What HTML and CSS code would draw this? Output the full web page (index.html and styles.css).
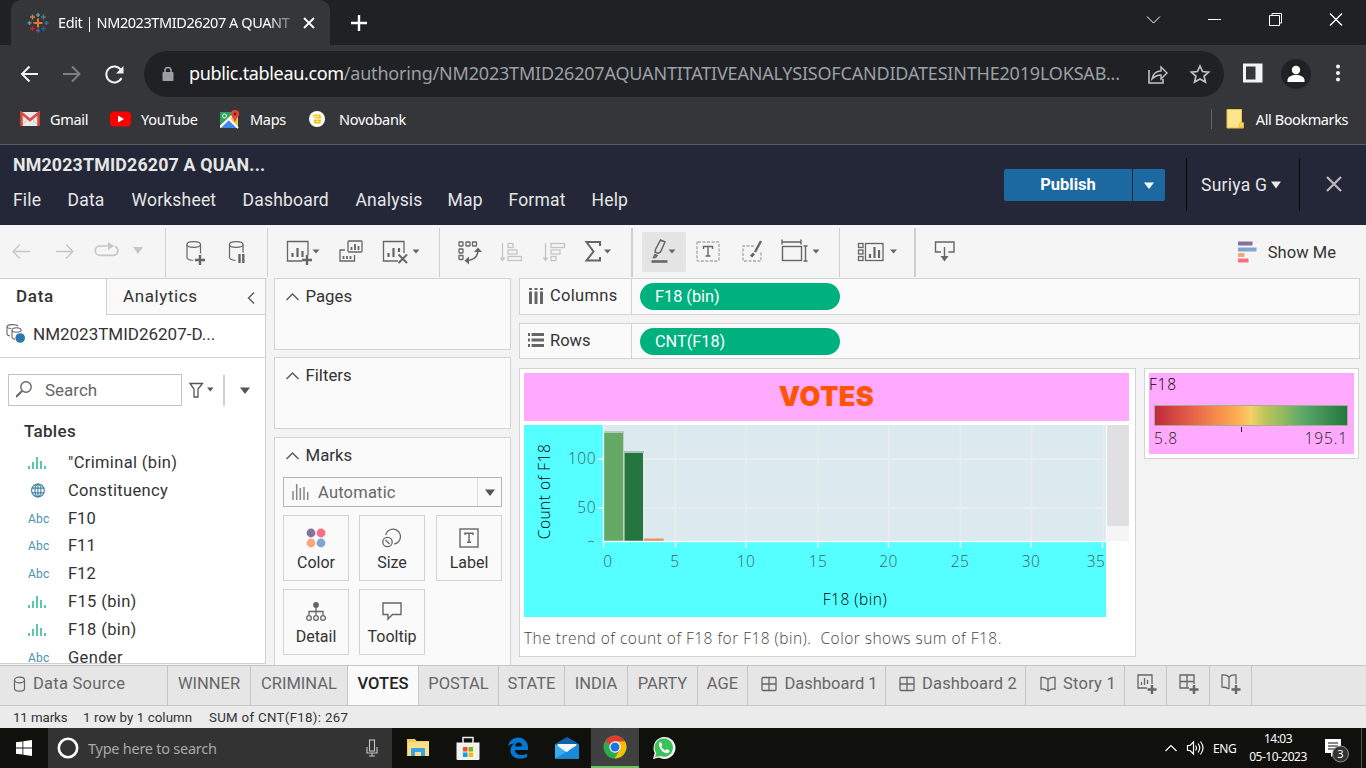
FILE: index.html
```html
<!DOCTYPE html>
<html lang="en">
<head>
<meta charset="utf-8">
<title>Edit | NM2023TMID26207 A QUANTITATIVE ANALYSIS</title>
<link rel="stylesheet" href="styles.css">
</head>
<body>
<div class="screen">

<header class="browser">
  <div class="tabstrip">
    <div class="browser-tab">
      <svg class="favicon" width="22" height="22" viewBox="27 12 22 22" fill="none" stroke-width="2">
        <path d="M38 18.500v9M33.500 23h9" stroke="#e8762d"/>
        <path d="M32.500 14.500v5M30 17h5" stroke="#c8893c" stroke-width="1.500"/>
        <path d="M43.500 14.500v5M41 17h5" stroke="#4e7a90" stroke-width="1.500"/>
        <path d="M32.500 26v5M30 28.500h5" stroke="#c72037" stroke-width="1.500"/>
        <path d="M43.500 26v5M41 28.500h5" stroke="#2c568f" stroke-width="1.500"/>
        <path d="M38 13v4M36 15h4M29.500 21v4M27.500 23h4" stroke="#6790a5" stroke-width="1.600"/>
        <path d="M38 28.500v4M36 30.500h4M46.500 21v4M44.500 23h4" stroke="#59619a" stroke-width="1.600"/>
      </svg>
      <span class="tab-title">Edit | NM2023TMID26207 A QUANT</span>
      <svg width="12" height="12" viewBox="0 0 12 12" stroke="#fff" stroke-width="1.800"><path d="M1 1l10 10M11 1L1 11"/></svg>
    </div>
    <svg class="new-tab" width="18" height="18" viewBox="0 0 18 18" stroke="#fff" stroke-width="2.400"><path d="M9 1v16M1 9h16"/></svg>
    <svg class="window-controls" width="200" height="20" viewBox="1145 10 200 20" fill="none" stroke="#fff" stroke-width="1">
      <path d="M1147 16.500l6.500 6.500 6.500-6.500M1208 19.500h13"/><path d="M1330 13.500l12 12M1342 13.500l-12 12" stroke-width="1.300"/>
      <path d="M1269.500 15.500h10v10h-10zM1272 15v-1.500h9.500v9.500h-1.500"/>
    </svg>
  </div>
  <div class="navbar">
    <svg width="110" height="24" viewBox="18 61 110 24" fill="none" stroke="#f1f3f4" stroke-width="2">
      <path d="M38 73H22M29.500 65.500L22 73l7.500 7.500"/>
      <path d="M63 73h16M72 65.500l7.500 7.500-7.500 7.500" stroke="#7d7f83"/>
      <path d="M121.500 77a8 8 0 1 1-.500-8"/>
      <path d="M123.500 65v7.500H116z" fill="#f1f3f4" stroke="none"/>
    </svg>
    <div class="omnibox">
      <svg width="12" height="16" viewBox="0 0 12 16"><path d="M3 6V4.500a3 3 0 0 1 6 0V6" fill="none" stroke="#9aa0a6" stroke-width="1.600"/><rect x=".5" y="6" width="11" height="9" rx="1" fill="#9aa0a6"/></svg>
      <span class="url"><b>public.tableau.com</b>/authoring/NM2023TMID26207AQUANTITATIVEANALYSISOFCANDIDATESINTHE2019LOKSAB...</span>
      <svg class="omni-actions" width="66" height="22" viewBox="1146 62 66 22" fill="none" stroke="#c0c3c6" stroke-width="1.600">
        <path d="M1149 69v13h14v-4"/>
        <path d="M1152 78c1-5 4-8 9-8v-4l6 6-6 6v-4c-4 0-6.500 1.500-9 4z" stroke-width="1.400"/>
        <path d="M1200 65l2.600 5.500 6 .6-4.500 4 1.300 6-5.400-3.200-5.400 3.200 1.300-6-4.500-4 6-.6z" stroke-width="1.700"/>
      </svg>
    </div>
    <svg class="nav-actions" width="110" height="32" viewBox="1240 58 110 32">
      <path d="M1243 63.500h19.500v19H1243z" fill="#f1f3f4"/><path d="M1246 66.500h9.500v13h-9.500z" fill="#35363a"/>
      <circle cx="1296" cy="74" r="15" fill="#202124"/>
      <circle cx="1296" cy="70" r="4.200" fill="#fff"/><path d="M1287.500 82v-2c0-3 4-5 8.500-5s8.500 2 8.500 5v2z" fill="#fff"/>
      <g fill="#f1f3f4"><circle cx="1338" cy="66.500" r="2"/><circle cx="1338" cy="73" r="2"/><circle cx="1338" cy="79.500" r="2"/></g>
    </svg>
  </div>
  <div class="bookmarks">
    <span class="bookmark bm-gmail">
      <svg width="20" height="16" viewBox="0 0 20 16"><rect x="1" y="1" width="18" height="14" fill="#e9e9e9"/><path d="M1 15L8 8M19 15l-7-7" stroke="#c9c9c9"/><path d="M1.500 15V2l8.500 7 8.500-7v13" fill="none" stroke="#dd4b3e" stroke-width="2.600"/></svg>Gmail</span>
    <span class="bookmark bm-youtube">
      <svg width="21" height="16" viewBox="0 0 21 16"><rect y=".5" width="21" height="15" rx="4" fill="#f00"/><path d="M8 4.500l6 3.500-6 3.500z" fill="#fff"/></svg>YouTube</span>
    <span class="bookmark bm-maps">
      <svg width="20" height="20" viewBox="0 0 20 20"><path d="M0 3h18v16H0z" fill="#f2c94c"/><path d="M0 3h14L0 17z" fill="#2da35f"/><path d="M1 19l8-8 8 8z" fill="#4285f4"/><path d="M0 18L16 3M9 10l9 9" stroke="#fff" stroke-width="2"/><circle cx="4.500" cy="7" r="2" fill="none" stroke="#fff"/><path d="M15 1a4 4 0 0 1 4 4c0 3-3 4-4 9-1-5-4-6-4-9a4 4 0 0 1 4-4z" fill="#e5473b"/><circle cx="15" cy="5" r="1.400" fill="#811"/></svg>Maps</span>
    <span class="bookmark bm-novo">
      <svg width="16" height="16" viewBox="0 0 16 16"><circle cx="8" cy="8" r="8" fill="#fff"/><path d="M3.500 5l2-1.500h6l.5 4H6zM4.500 8.500h7.500l-.5 4h-6z" fill="#f1c40f"/><path d="M5 5.800l5-.6M7 10.500h2.500" stroke="#fff"/></svg>Novobank</span>
    <span class="all-bookmarks">
      <svg width="18" height="20" viewBox="0 0 18 20"><path d="M1 .5h14.500v13l2 1v4.500H1z" fill="#ffe48e" stroke="#eebf3a"/><path d="M13.500 18.500v-4l2-1h2v5z" fill="#f8d24e" stroke="#d9a92b" stroke-width=".6"/></svg>All Bookmarks</span>
  </div>
</header>

<section class="app-head">
  <div class="app-left">
    <h1>NM2023TMID26207 A QUAN...</h1>
    <nav class="menu"><span>File</span><span>Data</span><span>Worksheet</span><span>Dashboard</span><span>Analysis</span><span>Map</span><span>Format</span><span>Help</span></nav>
  </div>
  <div class="publish"><b>Publish</b><i><svg width="10" height="7" viewBox="0 0 10 7"><path d="M0 .5h10L5 7z" fill="#fff"/></svg></i></div>
  <div class="user">Suriya G<svg width="10" height="8" viewBox="0 0 10 8"><path d="M0 .5h10L5 7.500z" fill="#e6e6e6"/></svg></div>
  <svg class="close-app" width="16" height="16" viewBox="0 0 16 16" stroke="#b9bac0" stroke-width="2.200"><path d="M1 1l14 14M15 1L1 15"/></svg>
</section>

<section class="toolbar">
  <div class="group g-history">
    <svg width="134" height="40" viewBox="11 232 134 40" fill="none" stroke="#c6c6c6" stroke-width="1.300">
      <path d="M30 251.500H13M20 244.500l-7 7 7 7M56 251.500h17M66 244.500l7 7-7 7"/>
      <path d="M108 246h-8a4.700 4.700 0 0 0 0 9.400h13a4.700 4.700 0 0 0 2-9" stroke-width="1.600"/><path d="M108 242l6 4-6 4z" fill="#c6c6c6" stroke="none"/>
      <path d="M133 247h10l-5 7z" fill="#c6c6c6" stroke="none"/>
    </svg>
  </div>
  <div class="group g-data">
    <svg width="62" height="40" viewBox="185 232 62 40" fill="none" stroke="#666" stroke-width="1.200">
      <path d="M187 244.500v13c0 1.500 2 2.500 6 3M200.500 244.500v9"/><ellipse cx="193.700" cy="244.500" rx="6.800" ry="2.800"/>
      <path d="M200 255v10M195 260h10" stroke-width="2.400"/>
      <path d="M229.500 244.500v13c0 1.500 2 2.500 6 3M243 244.500v8"/><ellipse cx="236.200" cy="244.500" rx="6.800" ry="2.800"/>
      <path d="M239.500 254v9M243.300 254v9" stroke-width="2.400"/>
    </svg>
  </div>
  <div class="group g-sheet">
    <svg width="136" height="40" viewBox="285 232 136 40" fill="none" stroke="#666" stroke-width="1.300">
      <path d="M302 261h-14.500v-19.500h20.500V255"/><path d="M292.500 257v-4M297.500 257v-9M302.500 257v-6" stroke-width="2.200"/><path d="M307 255v10M302 260h10" stroke-width="2.400"/><path d="M312.500 249.500h7l-3.500 4z" fill="#666" stroke="none"/>
      <rect x="348" y="241" width="14" height="11" rx="1"/><path d="M351.500 250v-3M355 250v-6M358.500 250v-4" stroke-width="1.800"/><path d="M345 250h-5v11h14.500v-6"/><path d="M343.500 259v-3M347 259v-3M350.500 259v-3" stroke-width="1.800"/>
      <path d="M398 261h-14.500v-19.500h20.500V253"/><path d="M388.500 257v-4M393.500 257v-9M399 252v-4" stroke-width="2.200"/><path d="M398.500 254.500l8.500 8.500M407 254.500l-8.500 8.500" stroke-width="2"/><path d="M412.500 249.500h7l-3.500 4z" fill="#666" stroke="none"/>
    </svg>
  </div>
  <div class="group g-sort">
    <svg width="158" height="40" viewBox="455 232 158 40" fill="none" stroke="#666" stroke-width="1.300">
      <rect x="459" y="242" width="4" height="4" rx=".5"/><rect x="466" y="242" width="4" height="4" rx=".5"/><rect x="472.500" y="242" width="4" height="4" rx=".5"/><rect x="459" y="249" width="4" height="4" rx=".5"/><rect x="459" y="255.500" width="4" height="4" rx=".5"/>
      <path d="M478 250c0 6-4 10-11 10.500" stroke-width="1.500"/><path d="M474 252l4-4.500 4 4.500zM469 256.500l-4.500 4 4.500 4z" fill="#666" stroke="none"/>
      <g stroke="#c5c5c5"><path d="M502.500 243v16"/><path d="M499.500 257.500h6l-3 4z" fill="#c5c5c5" stroke="none"/><rect x="508" y="243.500" width="5" height="4"/><rect x="508" y="250" width="9" height="4"/><rect x="508" y="256.500" width="13.500" height="4"/>
      <path d="M545.500 243v16"/><path d="M542.500 257.500h6l-3 4z" fill="#c5c5c5" stroke="none"/><rect x="551" y="243.500" width="13.500" height="4"/><rect x="551" y="250" width="9" height="4"/><rect x="551" y="256.500" width="5" height="4"/></g>
      <path d="M600 246v-4h-13.500l7 9.500-7 9h13.500v-3.500" stroke-width="2"/><path d="M604 249.500h7l-3.500 4z" fill="#666" stroke="none"/>
    </svg>
  </div>
  <div class="group g-format">
    <div class="highlighted"><svg width="44" height="40" viewBox="642 232 44 40" fill="none" stroke="#666" stroke-width="1.500"><path d="M655.500 249.500l5-9.500 4.500 2-4.500 10-2.500 1.500-3-1.500zM653.500 257.500l1.500-3 2 1-1.500 2z"/><path d="M651.500 261.500h16" stroke-width="2.600"/><path d="M668.500 249.500h7l-3.500 4z" fill="#666" stroke="none"/></svg></div>
    <svg width="126" height="40" viewBox="695 232 126 40" fill="none" stroke="#666" stroke-width="1.400">
      <rect x="697" y="242" width="22" height="19" rx="1" stroke="#aaa" stroke-dasharray="3 1.500"/><path d="M703.500 249v-2.500h9v2.500M708 246.500v9.500M705.500 256h5"/>
      <path d="M754 246h-11v15h18v-10" stroke="#aaa" stroke-dasharray="3 1.500"/><path d="M761 241l-6 11" stroke-width="2.400"/><path d="M751 256.500l3-3" stroke-width="3"/>
      <rect x="782.500" y="246.500" width="19" height="14"/><path d="M782 242h19M782 239.500v5M801 239.500v5M805.500 246v15M803.500 246h4M803.500 261h4"/><path d="M812.500 249.500h7l-3.500 4z" fill="#666" stroke="none"/>
    </svg>
  </div>
  <div class="group g-cards">
    <svg width="42" height="40" viewBox="856 232 42 40" fill="none" stroke="#666" stroke-width="1.300">
      <rect x="858.500" y="243.500" width="4.500" height="4"/><rect x="858.500" y="250" width="4.500" height="4"/><rect x="858.500" y="256.500" width="4.500" height="4"/><rect x="865.500" y="243.500" width="17.500" height="17"/><path d="M870 258v-4M874.500 258v-11M879 258v-8" stroke-width="2.200"/><path d="M890 249.500h7l-3.500 4z" fill="#666" stroke="none"/>
    </svg>
  </div>
  <div class="group g-download">
    <svg width="24" height="40" viewBox="933 232 24 40" fill="none" stroke="#666" stroke-width="1.400"><path d="M941 252h-5.500v-10h18.500v10h-5.500M944.500 247v11"/><path d="M940.500 256h8l-4 5.500z" fill="#666" stroke="none"/></svg>
  </div>
  <div class="show-me">
    <svg width="20" height="22" viewBox="0 0 20 22"><path d="M0 .5h14.500v4H0z" fill="#87719b"/><path d="M0 6.500h18.500v4H0z" fill="#80a5cf"/><path d="M0 12h6.500v4H0z" fill="#f5a87e"/><path d="M0 17.500h10.500v4H0z" fill="#fb6e80"/></svg>Show Me
  </div>
</section>

<main class="workspace">
  <aside class="data-pane">
    <div class="pane-tabs"><span class="pt-data">Data</span><span class="pt-analytics">Analytics<svg width="8" height="12" viewBox="0 0 8 12" fill="none" stroke="#555" stroke-width="1.300"><path d="M7 .5L1.500 6 7 11.500"/></svg></span></div>
    <div class="datasource">
      <svg width="20" height="20" viewBox="0 0 20 20" fill="none" stroke="#666" stroke-width="1.100"><path d="M1 3v7c0 1 1 1.500 3 2M1 3c0-3 9-3 11-1M1 3c1 1.500 3 1.500 4 1.500M6 6v7c0 1.500 2 2 3 2.500M6 6c0-3 9-3 9 0v1M6 6c0 3 9 3 9 0"/><circle cx="14.200" cy="14" r="4.800" fill="#2d76b1" stroke="none"/></svg>NM2023TMID26207-D...</div>
    <div class="search-row">
      <div class="search"><svg width="16" height="17" viewBox="0 0 16 17" fill="none" stroke="#666" stroke-width="1.400"><circle cx="10" cy="6" r="5.200"/><path d="M6 10l-6 6" stroke-width="2"/></svg>Search</div>
      <svg class="filter" width="25" height="16" viewBox="189 382 25 16" fill="none" stroke="#555" stroke-width="1.300"><path d="M190 383.500h12.500l-4.500 5.500v8h-4v-8z"/><path d="M207 387.500h6.500l-3.200 4z" fill="#555" stroke="none"/></svg>
      <svg class="more" width="10" height="7" viewBox="0 0 10 7"><path d="M0 .5h10L5 7z" fill="#555"/></svg>
    </div>
    <h2>Tables</h2>
    <ul class="fields">
      <li><svg class="bars"><use href="#bin"/></svg>"Criminal (bin)</li>
      <li><svg class="bars globe" viewBox="0 0 18 16" fill="none" stroke="#3f83a5" stroke-width="1.200"><circle cx="10" cy="8" r="6.800"/><ellipse cx="10" cy="8" rx="3.200" ry="6.800"/><path d="M3.500 5.500h13M3.500 10.500h13M10 1v14"/></svg>Constituency</li>
      <li><i>Abc</i>F10</li>
      <li><i>Abc</i>F11</li>
      <li><i>Abc</i>F12</li>
      <li><svg class="bars"><use href="#bin"/></svg>F15 (bin)</li>
      <li><svg class="bars"><use href="#bin"/></svg>F18 (bin)</li>
      <li><i>Abc</i>Gender</li>
    </ul>
    <svg class="defs"><defs><g id="bin" stroke="#4ac3a0" stroke-width="1.800"><path d="M1 14v-3M5 14V7M9 14V2M13 14V6M17 14v-3"/></g></defs></svg>
  </aside>

  <div class="cards">
    <div class="card"><h3><svg width="13" height="8" viewBox="0 0 13 8"><path d="M.5 7l6-6 6 6" fill="none" stroke="#555" stroke-width="1.300"/></svg>Pages</h3></div>
    <div class="card"><h3><svg width="13" height="8" viewBox="0 0 13 8"><path d="M.5 7l6-6 6 6" fill="none" stroke="#555" stroke-width="1.300"/></svg>Filters</h3></div>
    <div class="card marks"><h3><svg width="13" height="8" viewBox="0 0 13 8"><path d="M.5 7l6-6 6 6" fill="none" stroke="#555" stroke-width="1.300"/></svg>Marks</h3>
      <div class="mark-type"><svg width="17" height="17" viewBox="0 0 17 17" stroke="#888" stroke-width="1.500"><path d="M1 16V7M4.700 16V0M8.300 16V4M12 16V3M15.700 16V8"/></svg><span>Automatic</span><em><svg width="10" height="7" viewBox="0 0 10 7"><path d="M0 .5h10L5 7z" fill="#555"/></svg></em></div>
      <div class="mark-grid">
        <div><svg width="22" height="22" viewBox="0 0 22 22"><circle cx="6" cy="6" r="4.400" fill="#87719b"/><circle cx="16" cy="6" r="4.400" fill="#fb6e80"/><circle cx="6" cy="16" r="4.400" fill="#f5a87e"/><circle cx="16" cy="16" r="4.400" fill="#80a5cf"/></svg>Color</div>
        <div><svg width="22" height="22" viewBox="0 0 22 22" fill="none" stroke="#666" stroke-width="1.300"><circle cx="6.500" cy="15" r="4.700"/><path d="M4.500 13l4 4M4.700 8a7.500 7.500 0 1 1 8.500 9"/></svg>Size</div>
        <div><svg width="22" height="22" viewBox="0 0 22 22" fill="none" stroke="#666" stroke-width="1.400"><rect x="2" y="2" width="18" height="18"/><path d="M7 8V6.200h8V8M11 6v9M9 15.200h4"/></svg>Label</div>
        <div><svg width="22" height="22" viewBox="0 0 22 22" fill="none" stroke="#666" stroke-width="1.300"><circle cx="11" cy="4" r="2.900" fill="#666" stroke="none"/><path d="M11 6v8M4 14v-3.500h14V14"/><circle cx="4" cy="17" r="2.300"/><circle cx="11" cy="17" r="2.300"/><circle cx="18" cy="17" r="2.300"/></svg>Detail</div>
        <div><svg width="22" height="22" viewBox="0 0 22 22" fill="none" stroke="#666" stroke-width="1.400"><path d="M2 2h18v11.500h-8.500L7 18v-4.500H2z"/></svg>Tooltip</div>
      </div>
    </div>
  </div>

  <div class="canvas">
    <div class="shelf s-columns"><div class="shelf-label"><svg width="15" height="16" viewBox="0 0 15 16" fill="#666"><path d="M1 0h3v2H1zM6.500 0h3v2h-3zM12 0h3v2h-3zM1 3.500h3V16H1zM6.500 3.500h3V16h-3zM12 3.500h3V16h-3z"/></svg>Columns</div><div class="pill">F18 (bin)</div></div>
    <div class="shelf s-rows"><div class="shelf-label"><svg width="16" height="14" viewBox="0 0 16 14" fill="#666"><path d="M0 0h2v3H0zM0 5.500h2v3H0zM0 11h2v3H0zM3.500 0H16v3H3.500zM3.500 5.500H16v3H3.500zM3.500 11H16v3H3.500z"/></svg>Rows</div><div class="pill">CNT(F18)</div></div>
    <div class="viz-row">
      <div class="viz">
        <div class="viz-title">VOTES</div>
        <div class="viz-body">
          <svg class="chart" width="582" height="192" viewBox="524 425 582 192">
            <rect x="524" y="425" width="582" height="192" fill="#55ffff"/>
            <rect x="603" y="425" width="503" height="116" fill="#dce9ef"/>
            <path d="M604 459h502M604 508h502M675.500 425v116M746 425v116M818 425v116M889 425v116M960.500 425v116M1031.500 425v116M1103.500 425v116" stroke="#e8eeef" stroke-width="1.800" fill="none"/>
            <rect x="604" y="431" width="20" height="2" fill="#b9cbc0"/><rect x="604" y="433" width="19" height="108" fill="#64a966"/>
            <rect x="623" y="433" width="1" height="108" fill="#c4ccc4"/>
            <rect x="624" y="451" width="20" height="2" fill="#a3c3b3"/><rect x="624.500" y="453" width="18.500" height="88" fill="#24763e"/>
            <rect x="644" y="538" width="20" height="1" fill="#d9c3bb"/><rect x="644" y="539" width="19.500" height="2" fill="#ee8b56"/>
            <path d="M603.500 425v123M603 541.500h503M598 459h6M598 508h6" stroke="#eefafa" stroke-width="1.300"/>
            <path d="M675.500 541v7M746 541v7M818 541v7M888.500 541v7M960.500 541v7M1031 541v7M1102.500 541v7" stroke="#eefafa" stroke-width="1.400"/>
            <g class="tick">
              <text x="596" y="464" text-anchor="end">100</text><text x="596" y="513" text-anchor="end">50</text>
              <path d="M588 542q3-2 6 0" fill="none" stroke="#557f80"/>
              <text x="608" y="567">0</text><text x="675" y="567">5</text><text x="746" y="567">10</text><text x="818" y="567">15</text><text x="888.500" y="567">20</text><text x="960" y="567">25</text><text x="1031" y="567">30</text><text x="1096" y="567">35</text>
            </g>
            <text class="axis" x="855" y="605">F18 (bin)</text>
            <text class="axis" transform="translate(550 491.500) rotate(-90)">Count of F18</text>
          </svg>
          <div class="scroll"><div class="thumb"></div></div>
        </div>
        <div class="caption">The trend of count of F18 for F18 (bin).&nbsp; Color shows sum of F18.</div>
      </div>
      <div class="legend"><div class="legend-in">
        <div class="lg-title">F18</div>
        <div class="ramp"></div>
        <div class="lg-tick"></div>
        <div class="lg-range"><span>5.8</span><span>195.1</span></div>
      </div></div>
    </div>
  </div>
</main>

<nav class="sheet-tabs">
  <span class="w-src"><svg width="13" height="16" viewBox="0 0 13 16" fill="none" stroke="#666" stroke-width="1.200"><ellipse cx="6.500" cy="4" rx="5" ry="2.800"/><path d="M1.500 4v8.500c0 3.500 10 3.500 10 0V4"/></svg>Data Source</span>
  <span class="w-winner">WINNER</span><span class="w-criminal">CRIMINAL</span><span class="w-votes active">VOTES</span><span class="w-postal">POSTAL</span><span class="w-state">STATE</span><span class="w-india">INDIA</span><span class="w-party">PARTY</span><span class="w-age">AGE</span>
  <span class="w-dash1"><svg width="16" height="16" viewBox="0 0 16 16" fill="none" stroke="#666" stroke-width="1.300"><rect x="1" y="1.500" width="14" height="13" rx="1"/><path d="M8 1.500v13M1 8h14"/></svg>Dashboard 1</span>
  <span class="w-dash2"><svg width="16" height="16" viewBox="0 0 16 16" fill="none" stroke="#666" stroke-width="1.300"><rect x="1" y="1.500" width="14" height="13" rx="1"/><path d="M8 1.500v13M1 8h14"/></svg>Dashboard 2</span>
  <span class="w-story"><svg width="16" height="16" viewBox="0 0 16 16" fill="none" stroke="#666" stroke-width="1.300"><path d="M1 1.500c3-.5 5 0 7 2 2-2 4-2.500 7-2V13c-3-.5-5 .5-7 2-2-1.500-4-2.500-7-2zM8 3.500V15"/></svg>Story 1</span>
  <span class="w-new"><svg width="22" height="22" viewBox="0 0 22 22" fill="none" stroke="#666" stroke-width="1.300"><path d="M11 15H2V2h14v9M5.500 12V9M8.500 12V5M11.500 11V7"/><path d="M16 12v9M11.500 16.500h9" stroke-width="2.400"/></svg></span>
  <span class="w-new"><svg width="22" height="22" viewBox="0 0 22 22" fill="none" stroke="#666" stroke-width="1.300"><path d="M11 15H2V2h14v9M9 2v13M2 8.500h14"/><path d="M16 12v9M11.500 16.500h9" stroke-width="2.400"/></svg></span>
  <span class="w-new"><svg width="22" height="22" viewBox="0 0 22 22" fill="none" stroke="#666" stroke-width="1.300"><path d="M9 16c-2-1.500-4-2-7-2V2c3-.5 5 0 7 2 2-2 4-2.500 7-2v9M9 4v12"/><path d="M16 12v9M11.500 16.500h9" stroke-width="2.400"/></svg></span>
</nav>
<div class="status"><span>11 marks</span><span class="st-rows">1 row by 1 column</span><span class="st-sum">SUM of CNT(F18): 267</span></div>

<footer class="taskbar">
  <div class="start"><svg width="16" height="16" viewBox="0 0 16 16" fill="#fff"><path d="M0 2.300L6.500 1.400v6.200H0zM7.300 1.300L16 0v7.600H7.300zM0 8.400h6.500v6.200L0 13.700zM7.300 8.400H16V16l-8.700-1.300z"/></svg></div>
  <div class="win-search"><svg width="22" height="22" viewBox="0 0 22 22"><circle cx="11" cy="11" r="9.200" fill="none" stroke="#fff" stroke-width="2.600"/></svg><span>Type here to search</span><svg width="12" height="18" viewBox="0 0 12 18" fill="none" stroke="#c6c6c6" stroke-width="1.100"><rect x="3.500" y="1" width="5" height="11"/><path d="M1 8v6h10V8M6 14v3M3 17h6"/></svg></div>
  <div class="task"><svg width="22" height="20" viewBox="0 0 22 20"><path d="M0 1h8l1.500 2H22v15H0z" fill="#f2ca55"/><path d="M1 4h21v14H1z" fill="#fbe08c"/><path d="M4 18v-7q0-1 1-1h12q1 0 1 1v7h-4v-4H8v4z" fill="#3aa5dc"/></svg></div>
  <div class="task"><svg width="24" height="24" viewBox="0 0 24 24"><path d="M7 7V1.500h10V7" fill="none" stroke="#eee" stroke-width="1.500"/><path d="M.5 6.500h23V23q0 1-1 1h-21q-1 0-1-1z" fill="#f2f2f2"/><path d="M7 11h4.500v4.500H7z" fill="#f25022"/><path d="M12.500 11H17v4.500h-4.500z" fill="#7fba00"/><path d="M7 16.500h4.500V21H7z" fill="#00a4ef"/><path d="M12.500 16.500H17V21h-4.500z" fill="#ffb900"/></svg></div>
  <div class="task"><svg width="22" height="22" viewBox="0 0 22 22"><path d="M1 9.500C2 4 6 .5 11 .5c6 0 10 4.500 10 9.500v3H8c0 3.500 3 5 6 5 2.300 0 4-.5 6-1.500V20c-2 1.200-4.500 1.600-7 1.600C7 21.600 3.500 18 3.500 13.500c0-3 1.500-5.500 4-7C4.500 6.800 2.300 7.500 1 9.500zM8 9.500h7c0-2.500-1.200-4-3.500-4-2 0-3.200 1.500-3.500 4z" fill="#0078d7" fill-rule="evenodd"/></svg></div>
  <div class="task"><svg width="24" height="24" viewBox="0 0 24 24"><path d="M0 8l12-7 12 7v14.500H0z" fill="#0f62a8"/><path d="M2.500 8h19v10h-19z" fill="#f2f6f8"/><path d="M0 8l12 8.500L24 8v14.500H0z" fill="#35aeea"/><path d="M24 8L0 22.500h24z" fill="#1a8bd8"/><path d="M3 8l9 8 9-8z" fill="#f5f5f5"/></svg></div>
  <div class="task open"><svg width="24" height="24" viewBox="0 0 24 24"><circle cx="12" cy="12" r="11.500" fill="#2da94f"/><path d="M12 12L2 6.500A11.500 11.500 0 0 1 22 6.500H12z" fill="#e33b2e"/><path d="M12 6.500h10A11.500 11.500 0 0 1 11.500 23.500L17 14.500z" fill="#fdbd00"/><circle cx="12" cy="12" r="5.700" fill="#fff"/><circle cx="12" cy="12" r="4.500" fill="#1a73e8"/></svg></div>
  <div class="task last"><svg width="24" height="24" viewBox="0 0 24 24"><path d="M1 23l1.700-6A11 11 0 1 1 7 21.500z" fill="#f4f4f4"/><path d="M3 21l1.300-4A9.200 9.200 0 1 1 8 20z" fill="#3ac157"/><path d="M7 7.500q1.500-2.500 2.500-.5l.8 2-1 1.500q1.500 3 4.200 4l1.300-1.500 2.700 1.500q0 3-3.200 2.700C10.500 16.500 7 12.500 7 7.500z" fill="#fff"/></svg></div>
  <div class="tray">
    <svg width="40" height="16" viewBox="1164 740 40 16" fill="none" stroke="#fff" stroke-width="1.200"><path d="M1165.500 751l5.500-5.500 5.500 5.500M1187.500 745.500h2.500l3.500-3.500v12l-3.500-3.500h-2.500zM1195.500 745.500q2 2.500 0 5M1198 743.500q3.500 4.500 0 9M1200.500 741.500q5 6.500 0 13"/></svg>
    <span class="lang">ENG</span>
    <span class="clock">14:03<br>05-10-2023</span>
    <svg class="notify" width="28" height="26" viewBox="0 0 28 26"><path d="M0 1h16v14H10l-4 4v-4H0z" fill="#fff"/><path d="M3 5h10M3 8h10M3 11h7" stroke="#111"/><circle cx="15.500" cy="16" r="8" fill="#333" stroke="#aaa" stroke-width=".8"/><text x="15.500" y="20" text-anchor="middle" fill="#fff">3</text></svg>
  </div>
</footer>
</div>
</body>
</html>
```
FILE: styles.css
```css
* { box-sizing: border-box; }
body { margin: 0; }
h1, h2, h3, ul { margin: 0; padding: 0; font-weight: 400; }
svg { display: block; flex: none; }
.screen {
  width: 1366px; height: 768px; overflow: hidden;
  display: flex; flex-direction: column;
  font-family: Roboto, "Liberation Sans", sans-serif;
  white-space: nowrap; color: #333;
}
.screen > * { flex: none; }

/* Browser window */
.browser { height: 145px; background: #35363a; border-bottom: 1px solid #5c5d61; color: #fff; font-family: "Noto Sans", "Open Sans", sans-serif; }
.tabstrip { height: 45px; background: #202124; display: flex; padding-left: 11px; }
.browser-tab { width: 319px; background: #35363a; border-radius: 10px 10px 0 0; display: flex; align-items: center; padding-left: 16px; }
.tab-title { width: 234px; margin: -2px 11px 0 9px; font-size: 14.500px; letter-spacing: -.42px; -webkit-mask-image: linear-gradient(90deg, #000 90%, rgba(0,0,0,.25) 100%); mask-image: linear-gradient(90deg, #000 90%, rgba(0,0,0,.25) 100%); }
.new-tab { margin: 14px 0 0 20px; }
.window-controls { margin: 10px 21px 0 auto; }
.navbar { height: 57px; display: flex; align-items: center; padding: 1px 16px 0 18px; }
.omnibox { width: 1080px; height: 46px; margin-left: 16px; border-radius: 23px; background: #202124; display: flex; align-items: center; padding-left: 18px; }
.url { margin: -2px 0 0 15px; width: 940px; font-size: 18px; letter-spacing: -.19px; color: #9aa0a6; }
.url b { font-weight: 400; color: #fff; letter-spacing: -.34px; }
.omni-actions { margin-left: 17px; }
.nav-actions { margin-left: 16px; }
.bookmarks { height: 42px; display: flex; align-items: center; padding: 0 18px 8px 20px; font-size: 14.500px; letter-spacing: -.3px; }
.bookmark, .all-bookmarks { display: flex; align-items: center; }
.bookmark { gap: 10px; }
.bm-gmail { width: 90px; }
.bm-youtube { width: 110px; }
.bm-maps { width: 89px; }
.bm-novo { gap: 14px; }
.all-bookmarks { margin-left: auto; gap: 12px; border-left: 1px solid #66676b; padding-left: 14px; letter-spacing: -.42px; }

/* Application header */
.app-head { height: 80px; background: #242738; color: #e6e6e6; display: flex; padding-left: 13px; }
.app-left { width: 991px; }
.app-head h1 { height: 40px; line-height: 40px; font-size: 17.800px; font-weight: 700; letter-spacing: .18px; }
.menu { display: grid; grid-template-columns: 54.500px 64px 111px 113px 92px 61px 83px 60px; font-size: 17.500px; line-height: 30px; letter-spacing: .2px; }
.publish { width: 161px; height: 32px; margin-top: 24px; display: flex; background: #1b69a0; border-radius: 2px; color: #fff; font-size: 16.500px; }
.publish b { width: 129px; line-height: 31px; text-align: center; border-right: 1px solid #242738; }
.publish i { flex: 1; display: grid; place-items: center; }
.user { width: 114px; height: 53px; margin: 13px 0 0 21px; border: solid #050509; border-width: 0 1px; padding: 1px 0 0 14px; display: flex; align-items: center; gap: 4px; font-size: 17.500px; letter-spacing: .25px; }
.close-app { margin: 31px 0 0 26px; }

/* Toolbar */
.toolbar { height: 53px; background: #f5f5f5; display: flex; padding-top: 3px; }
.group { height: 49px; padding-top: 4px; border-right: 1px solid #cfcfcf; display: flex; }
.g-history { width: 166px; padding-left: 11px; }
.g-data { width: 102px; padding-left: 19px; }
.g-sheet { width: 172px; padding-left: 17px; }
.g-sort { width: 193px; padding-left: 15px; border-right-width: 2px; }
.g-format { width: 207px; padding-left: 9px; gap: 9px; }
.g-cards { width: 76px; padding-left: 16px; border-right-width: 2px; }
.g-download { padding-left: 17px; border: 0; }
.highlighted { height: 40px; background: #e4e4e4; border-radius: 1px; }
.show-me { margin: 2px 30px 0 auto; display: flex; gap: 10px; align-items: center; height: 44px; font-size: 16.500px; letter-spacing: .05px; }

/* Workspace */
.workspace { height: 387px; background: #f3f3f3; display: flex; overflow: hidden; }
.data-pane { width: 266px; height: 386px; background: #fff; border: solid #d0d0d0; border-width: 1px 1px 1px 0; overflow: hidden; }
.pane-tabs { height: 36px; display: flex; font-size: 17px; line-height: 34px; }
.pt-data { width: 106px; padding-left: 16px; font-weight: 500; letter-spacing: .7px; }
.pt-analytics { flex: 1; background: #fafafa; border: solid #d0d0d0; border-width: 0 0 1px 1px; padding: 0 10px 2px 16px; display: flex; justify-content: space-between; align-items: center; letter-spacing: .6px; line-height: 32px; }
.pt-analytics svg { margin-top: 4px; }
.datasource { height: 43px; border-bottom: 1px solid #d0d0d0; padding: 0 0 5px 6px; display: flex; align-items: center; gap: 7px; font-size: 17px; }
.search-row { display: flex; align-items: center; padding: 16px 0 0 8px; }
.search { width: 174px; height: 32px; border: 1px solid #c3c3c3; display: flex; align-items: center; gap: 13px; padding: 0 0 1px 7px; font-size: 17px; color: #666; }
.filter { margin-left: 7px; }
.more { box-sizing: content-box; margin-left: 9px; padding: 12px 0 12px 15px; border-left: 2px solid #d0d0d0; }
.data-pane h2 { padding: 12px 0 0 24px; font-size: 17px; font-weight: 500; line-height: 26px; letter-spacing: .3px; }
.fields { list-style: none; padding: 4.500px 0 0 28px; font-size: 16.500px; letter-spacing: .35px; }
.fields li { height: 27.830px; display: flex; align-items: center; }
.fields li:nth-child(n+3):nth-child(-n+5) { letter-spacing: 0; }
.bars { width: 18px; height: 15px; margin-right: 22px; }
.fields i { width: 40px; font-style: normal; font-size: 12px; letter-spacing: .2px; color: #4a92b0; padding-top: 1px; }
.defs { width: 0; height: 0; }

.cards { width: 237px; margin-left: 8px; display: flex; flex-direction: column; gap: 7px; }
.card { flex: none; height: 72px; background: #fafafa; border: 1px solid #d3d3d3; padding: 0 8px; }
.card h3 { display: flex; align-items: center; gap: 7px; line-height: 35px; padding-left: 2.500px; font-size: 16.800px; }
.marks { height: 240px; margin-top: 1px; }
.mark-type { height: 30px; margin-top: 4px; border: 1px solid #b5b5b5; display: flex; align-items: center; padding-left: 8px; color: #666; font-size: 16.500px; letter-spacing: .2px; }
.mark-type span { flex: 1; padding-left: 9px; }
.mark-type em { width: 24px; height: 28px; display: grid; place-items: center; border-left: 1px solid #ddd; }
.mark-grid { display: grid; grid-template-columns: 76px 77px 66px; gap: 8px 0; padding-top: 8px; font-size: 16px; }
.mark-grid div { width: 66px; height: 66px; border: 1px solid #d3d3d3; display: flex; flex-direction: column; align-items: center; padding-top: 11px; gap: 4px; line-height: 20px; }

.canvas { width: 841px; margin-left: 8px; }
.shelf { height: 37px; background: #fafafa; border: 1px solid #d3d3d3; display: flex; align-items: center; }
.s-rows { height: 36px; margin-top: 8px; }
.shelf-label { width: 112px; height: 100%; border-right: 1px solid #d3d3d3; display: flex; align-items: center; gap: 7px; padding: 0 0 2px 8px; font-size: 16.500px; letter-spacing: .3px; }
.s-rows .shelf-label { gap: 6px; letter-spacing: 0; }
.pill { width: 200px; height: 27px; margin-left: 8px; border-radius: 14px; background: #00b180; color: #fff; padding-left: 15px; line-height: 27px; font-size: 16.300px; }
.viz-row { display: flex; gap: 8px; align-items: flex-start; margin-top: 9px; }
.viz { width: 617px; height: 289px; background: #fff; border: 1px solid #d3d3d3; padding: 4px 6px 0 4px; }
.viz-title { height: 48px; background: #ffaaff; color: #ff5500; font: 900 27px/48px Inter, "Open Sans", sans-serif; letter-spacing: .4px; text-align: center; }
.viz-body { display: flex; gap: 1px; margin-top: 4px; }
.chart text { font-family: "Open Sans", sans-serif; font-size: 15.500px; font-weight: 300; letter-spacing: .5px; }
.tick text { fill: #3f6061; }
.tick text:nth-of-type(n+3), .axis { text-anchor: middle; }
.chart .axis { fill: #000; }
.scroll { width: 22px; height: 116px; background: #f5f5f5; }
.thumb { height: 101px; background: #e0e0e0; }
.caption { line-height: 43px; font-family: "Open Sans", sans-serif; font-weight: 300; font-size: 15.500px; letter-spacing: .48px; color: #444; }
.legend { width: 215px; height: 91px; background: #fff; border: 1px solid #d3d3d3; padding: 4px; }
.legend-in { height: 81px; background: #ffaaff; padding: 0 6px 0 5px; font-family: "Open Sans", sans-serif; font-size: 15.500px; font-weight: 300; color: #000; }
.lg-title { margin-left: -5px; height: 32px; line-height: 23px; letter-spacing: .8px; }
.ramp { height: 21px; border: 1px solid #aaaa96; background: linear-gradient(90deg, #be2a3e, #e25b48 17%, #f88f4d 33%, #fdb155 44%, #f4d166 50%, #b9c45a 58%, #90b960 67%, #5da869 77%, #22763f); }
.lg-tick { width: 1px; height: 5px; margin: 1px 0 0 87px; background: #222; }
.lg-range { display: flex; justify-content: space-between; line-height: 13px; color: #222; letter-spacing: .9px; }

/* Worksheet tabs */
.sheet-tabs { height: 41px; background: #e6e6e6; border: solid #c6c6c6; border-width: 1px 0; display: flex; font-size: 16.500px; color: #666; }
.sheet-tabs span { border-right: 1px solid #c6c6c6; display: flex; align-items: center; justify-content: center; padding-bottom: 4px; gap: 7px; }
.sheet-tabs svg { margin-top: 1px; }
.sheet-tabs .active { background: #fafafa; color: #222; font-weight: 500; }
.sheet-tabs .w-src { width: 168px; justify-content: flex-start; padding-left: 13px; letter-spacing: .25px; }
.w-winner { width: 83px; }
.w-criminal { width: 97px; }
.w-votes { width: 71px; }
.w-postal { width: 80px; }
.w-state { width: 66px; }
.w-india { width: 63px; }
.w-party { width: 70px; }
.w-age { width: 50px; }
.w-dash1 { width: 138px; padding-left: 6px; }
.w-dash2 { width: 140px; padding-left: 5px; letter-spacing: .15px; }
.w-story { width: 99px; padding-left: 6px; letter-spacing: .25px; }
.w-new { width: 42.300px; padding-left: 2px; }
.status { height: 22px; background: #ebebeb; display: flex; padding-left: 13px; line-height: 23px; font-size: 13.300px; }
.status span { width: 70px; letter-spacing: -.1px; }
.status .st-rows { width: 126px; letter-spacing: .08px; }
.status .st-sum { width: auto; letter-spacing: .3px; }

/* Taskbar */
.taskbar { height: 40px; background: #10100d; display: flex; font-family: "Noto Sans", "Open Sans", sans-serif; color: #fff; }
.start { width: 48px; display: grid; place-items: center; }
.win-search { width: 344px; background: #333; display: flex; align-items: center; padding: 0 14px 0 9px; color: #a8a8a8; font-size: 14.500px; letter-spacing: -.25px; }
.win-search span { flex: 1; padding-left: 9px; }
.task { width: 49.700px; display: grid; place-items: center; padding-left: 3px; }
.task.open { width: 48px; background: #3f4140; border-bottom: 2px solid #66c75c; padding-left: 0; }
.task.last { padding-left: 1px; }
.tray { margin-left: auto; display: flex; align-items: center; height: 40px; font-size: 12px; }
.lang { width: 44px; padding-left: 9px; letter-spacing: -.45px; }
.clock { width: 60px; text-align: center; line-height: 18px; letter-spacing: -.5px; }
.notify { margin: 6px 0 0 17px; font-size: 11px; }
.tray::after { content: ""; width: 1px; height: 40px; margin: 0 4px 0 8px; background: #555; }
```
